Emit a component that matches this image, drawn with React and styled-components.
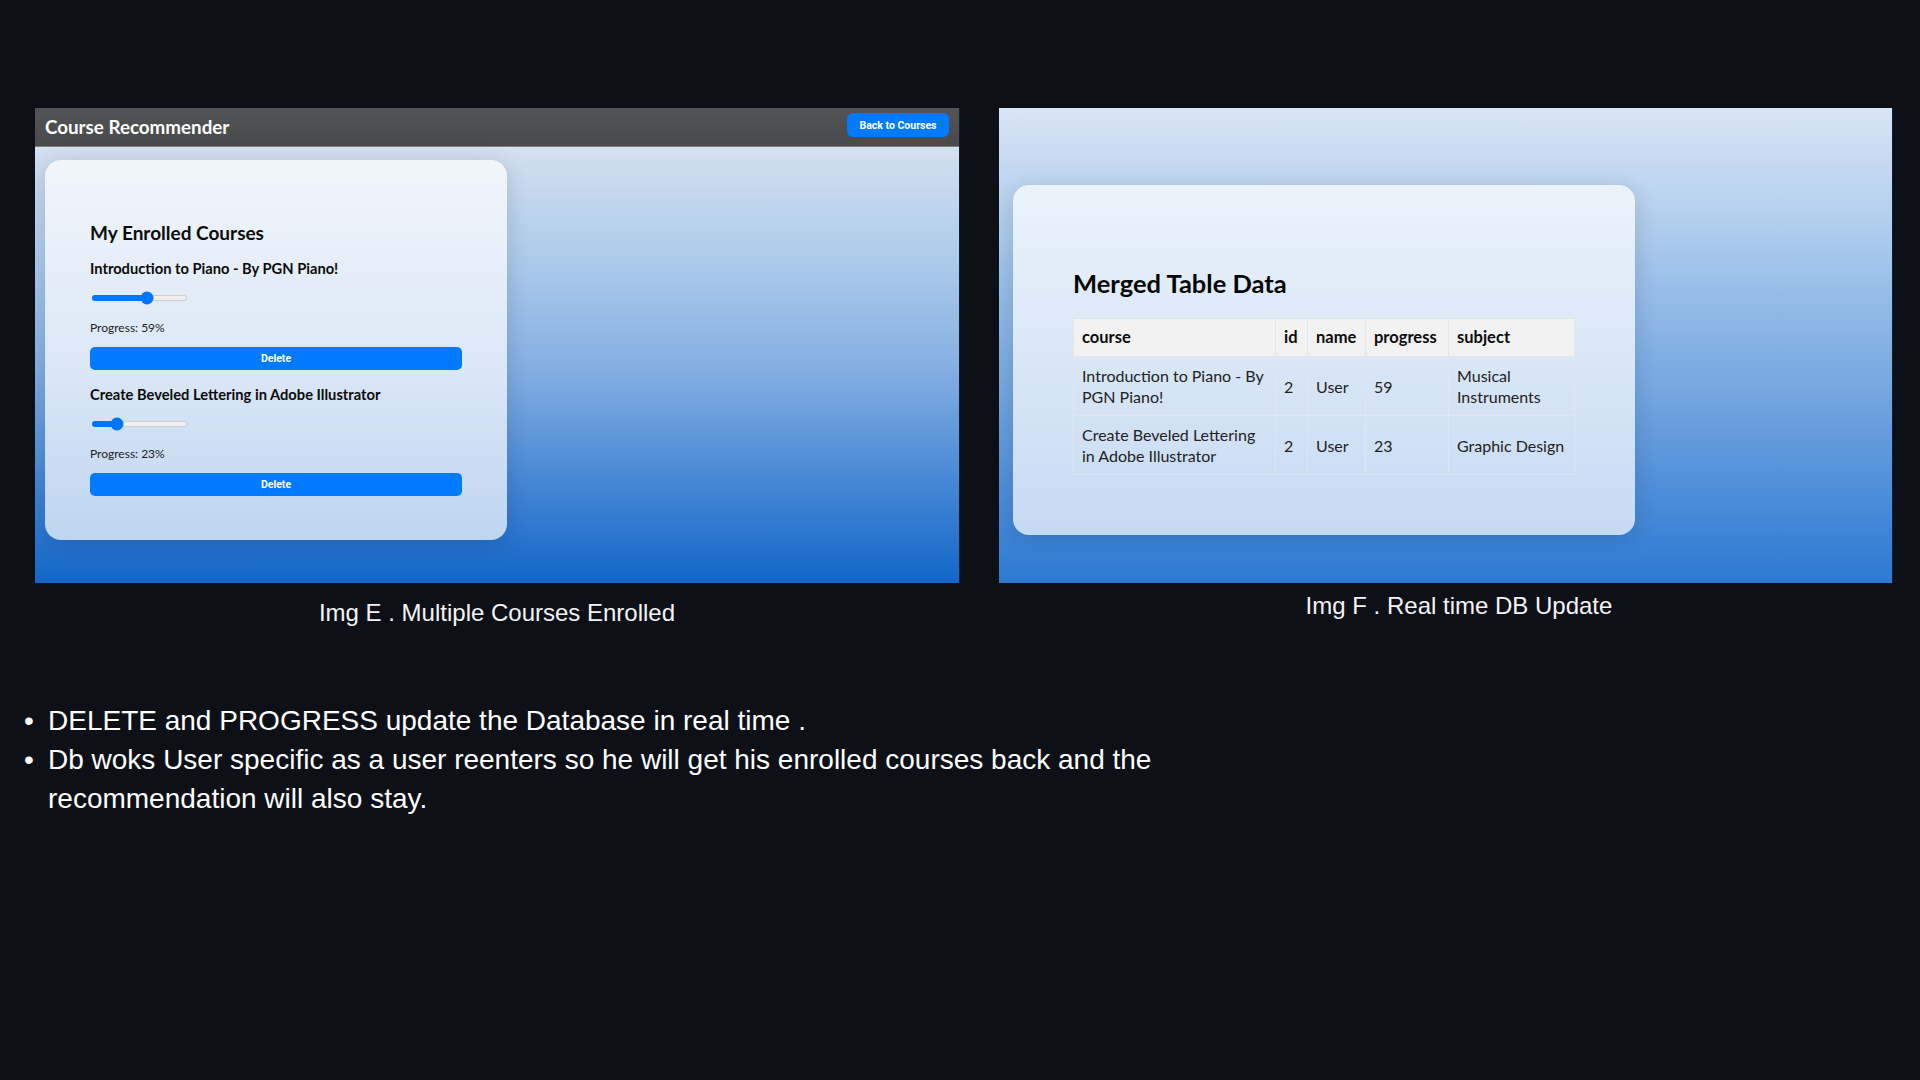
import React from "react";
import styled, { createGlobalStyle } from "styled-components";

const GlobalStyle = createGlobalStyle`
  html, body { margin: 0; padding: 0; background: #0d1017; }
  body { font-family: "Liberation Sans", Arial, sans-serif; }
  * { box-sizing: border-box; }
`;

const Page = styled.div`
  width: 1920px;
  height: 1080px;
  padding-top: 108px;
  background: #0d1017;
  color: #ffffff;
  overflow: hidden;
`;

const FigureRow = styled.div`
  display: flex;
  align-items: flex-start;
  gap: 40px;
  padding-left: 35px;
`;

const Figure = styled.figure`
  margin: 0;
  display: flex;
  flex-direction: column;
  width: ${(p) => p.$w}px;
`;

const Caption = styled.figcaption`
  margin-top: ${(p) => p.$mt}px;
  padding-left: ${(p) => p.$shift || 0}px;
  font-family: "Liberation Sans", Arial, sans-serif;
  font-size: 24px;
  line-height: 27px;
  text-align: center;
  color: #f4f4f4;
`;

/* ---------- Left screenshot ---------- */
const Shot = styled.div`
  width: 100%;
  height: 475px;
  display: flex;
  flex-direction: column;
  overflow: hidden;
  box-shadow: 1px 0 0 rgba(10, 40, 80, 0.6);
`;

const AppHeader = styled.header`
  height: 39px;
  flex: none;
  display: flex;
  align-items: center;
  justify-content: space-between;
  padding: 0 10px 2px;
  background: linear-gradient(180deg, #535456 0%, #47494b 100%);
  border-bottom: 1px solid #7a7f85;
`;

const AppTitle = styled.h1`
  margin: 0;
  font-family: Lato, "Noto Sans", sans-serif;
  font-weight: 700;
  font-size: 18.8px;
  color: #ffffff;
`;

const BackButton = styled.button`
  width: 102px;
  height: 24px;
  margin-top: -2px;
  padding: 0;
  border: 0;
  border-radius: 6px;
  background: #007bff;
  color: #ffffff;
  font-family: Roboto, "Liberation Sans", sans-serif;
  font-weight: 700;
  font-size: 10.5px;
`;

const AppBody = styled.div`
  flex: 1;
  padding: 13px 10px;
  background: linear-gradient(
    180deg,
    #d4e1ef 0%,
    #a9c8ea 28%,
    #86b0e2 50%,
    #4a8ad6 75%,
    #1266c8 100%
  );
`;

const Card = styled.div`
  width: ${(p) => p.$w}px;
  padding: ${(p) => p.$pad};
  border-radius: 16px;
  background: rgba(255, 255, 255, 0.7);
  box-shadow: 0 4px 22px rgba(0, 20, 60, 0.16);
  font-family: Lato, "Noto Sans", sans-serif;
  color: #111111;
`;

const CardHeading = styled.h2`
  margin: 0;
  font-weight: 700;
  font-size: 19px;
  line-height: 24px;
  color: #0b0b0b;
`;

const CourseList = styled.div`
  display: flex;
  flex-direction: column;
  gap: 15px;
  margin-top: 14px;
`;

const CourseItem = styled.div`
  display: flex;
  flex-direction: column;
`;

const CourseTitle = styled.h3`
  margin: 0;
  font-weight: 700;
  font-size: 14.7px;
  line-height: 18px;
  color: #0b0b0b;
`;

const SliderWrap = styled.div`
  width: 99px;
  height: 16px;
  margin-top: 13px;
  padding: 0 2px;
  display: flex;
  align-items: center;
`;

const Track = styled.div`
  position: relative;
  width: 95px;
  height: 6px;
  border-radius: 3px;
  background: #efefef;
  box-shadow: inset 0 0 0 1px #cfcfcf;
`;

const Fill = styled.div`
  position: absolute;
  left: 0;
  top: 0;
  bottom: 0;
  border-radius: 3px;
  background: #0075ff;
`;

const Thumb = styled.div`
  position: absolute;
  top: 50%;
  width: 13px;
  height: 13px;
  border-radius: 50%;
  background: #0075ff;
  transform: translate(-50%, -50%);
`;

const ProgressText = styled.p`
  margin: 14px 0 0;
  font-size: 12px;
  line-height: 16px;
  color: #222222;
`;

const DeleteButton = styled.button`
  width: 100%;
  height: 23px;
  margin-top: 11px;
  padding: 0;
  border: 0;
  border-radius: 5px;
  background: #007bff;
  color: #ffffff;
  font-family: Roboto, "Liberation Sans", sans-serif;
  font-weight: 700;
  font-size: 10.5px;
`;

/* ---------- Right screenshot ---------- */
const TableShot = styled.div`
  width: 100%;
  height: 475px;
  padding: 77px 14px 0;
  background: linear-gradient(
    180deg,
    #d8e5f3 0%,
    #b5d0ee 22%,
    #94bce7 40%,
    #74a6df 60%,
    #4f8fd9 80%,
    #2c7ad2 100%
  );
  box-shadow: 1px 0 0 rgba(10, 40, 80, 0.6);
`;

const TableTitle = styled.h2`
  margin: 0 0 20px;
  font-weight: 700;
  font-size: 25.5px;
  line-height: 30px;
  color: #050505;
`;

const Table = styled.table`
  width: 100%;
  border-collapse: collapse;
  table-layout: fixed;
  font-size: 16px;
  color: #222222;
`;

const Col = styled.col`
  width: ${(p) => p.$w}px;
`;

const Th = styled.th`
  padding: 8px;
  line-height: 21px;
  font-size: 16.5px;
  text-align: left;
  font-weight: 700;
  color: #0b0b0b;
  background: #f2f2f2;
  border: 1px solid #e2e6eb;
`;

const Td = styled.td`
  padding: 8px;
  line-height: 21px;
  text-align: left;
  vertical-align: middle;
  border: 1px solid rgba(226, 232, 240, 0.75);
`;

/* ---------- Notes ---------- */
const Notes = styled.ul`
  list-style: none;
  margin: 75px 0 0;
  padding: 0 0 0 24px;
  width: 1250px;
  font-family: "Liberation Sans", Arial, sans-serif;
  font-size: 28px;
  line-height: 39px;
  color: #ffffff;
`;

const Note = styled.li`
  display: flex;
`;

const Dot = styled.span`
  flex: none;
  width: 24px;
`;

const courses = [
  { title: "Introduction to Piano - By PGN Piano!", progress: 59 },
  { title: "Create Beveled Lettering in Adobe Illustrator", progress: 23 },
];

const rows = [
  { course: "Introduction to Piano - By PGN Piano!", id: 2, name: "User", progress: 59, subject: "Musical Instruments" },
  { course: "Create Beveled Lettering in Adobe Illustrator", id: 2, name: "User", progress: 23, subject: "Graphic Design" },
];

function Slider({ value }) {
  const travel = 95 - 12;
  const x = 6 + (value / 100) * travel;
  return (
    <SliderWrap>
      <Track>
        <Fill style={{ width: `${x}px` }} />
        <Thumb style={{ left: `${x}px` }} />
      </Track>
    </SliderWrap>
  );
}

export default function App() {
  return (
    <>
      <GlobalStyle />
      <Page>
        <FigureRow>
          <Figure $w={924}>
            <Shot>
              <AppHeader>
                <AppTitle>Course Recommender</AppTitle>
                <BackButton>Back to Courses</BackButton>
              </AppHeader>
              <AppBody>
                <Card $w={462} $pad="61px 45px 44px">
                  <CardHeading>My Enrolled Courses</CardHeading>
                  <CourseList>
                    {courses.map((c) => (
                      <CourseItem key={c.title}>
                        <CourseTitle>{c.title}</CourseTitle>
                        <Slider value={c.progress} />
                        <ProgressText>Progress: {c.progress}%</ProgressText>
                        <DeleteButton>Delete</DeleteButton>
                      </CourseItem>
                    ))}
                  </CourseList>
                </Card>
              </AppBody>
            </Shot>
            <Caption $mt={16}>Img E . Multiple Courses Enrolled</Caption>
          </Figure>

          <Figure $w={893}>
            <TableShot>
              <Card $w={622} $pad="83px 60px 60px">
                <TableTitle>Merged Table Data</TableTitle>
                <Table>
                  <colgroup>
                    <Col $w={202} />
                    <Col $w={32} />
                    <Col $w={58} />
                    <Col $w={83} />
                    <Col $w={126} />
                  </colgroup>
                  <thead>
                    <tr>
                      <Th>course</Th>
                      <Th>id</Th>
                      <Th>name</Th>
                      <Th>progress</Th>
                      <Th>subject</Th>
                    </tr>
                  </thead>
                  <tbody>
                    {rows.map((r) => (
                      <tr key={r.course}>
                        <Td>{r.course}</Td>
                        <Td>{r.id}</Td>
                        <Td>{r.name}</Td>
                        <Td>{r.progress}</Td>
                        <Td>{r.subject}</Td>
                      </tr>
                    ))}
                  </tbody>
                </Table>
              </Card>
            </TableShot>
            <Caption $mt={9} $shift={27}>Img F . Real time DB Update</Caption>
          </Figure>
        </FigureRow>

        <Notes>
          <Note>
            <Dot>•</Dot>
            <span>DELETE and PROGRESS update the Database in real time .</span>
          </Note>
          <Note>
            <Dot>•</Dot>
            <span>
              Db woks User specific as a user reenters so he will get his enrolled courses back and the
              recommendation will also stay.
            </span>
          </Note>
        </Notes>
      </Page>
    </>
  );
}
